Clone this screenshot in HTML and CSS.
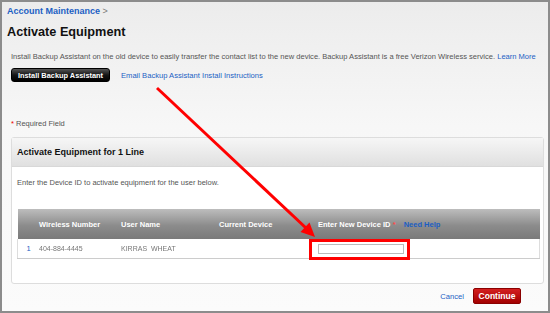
FILE: index.html
```html
<!DOCTYPE html>
<html lang="en">
<head>
    <meta charset="UTF-8">
    <title>Activate Equipment</title>
    <link rel="stylesheet" href="styles.css">
</head>
<body>

    <div class="frame">
        <div class="crumbs"><a href="#">Account Maintenance</a> <span class="sep">&gt;</span></div>
        <h1>Activate Equipment</h1>

        <p class="intro">Install Backup Assistant on the old device to easily transfer the contact list to the new device. Backup Assistant is a free Verizon Wireless service. <a href="#">Learn More</a></p>
        <div class="backup">
            <button class="btn-dark">Install Backup Assistant</button>
            <a href="#">Email Backup Assistant Install Instructions</a>
        </div>

        <div class="required"><span class="star">*</span> Required Field</div>

        <div class="panel">
            <div class="panel-head">Activate Equipment for 1 Line</div>
            <div class="panel-body">
                <p>Enter the Device ID to activate equipment for the user below.</p>
                <table class="lines">
                    <thead>
                        <tr>
                            <th class="num"></th>
                            <th class="c-wn">Wireless Number</th>
                            <th class="c-un">User Name</th>
                            <th class="c-cd">Current Device</th>
                            <th class="c-id">Enter New Device ID <span class="star">*</span> <a href="#">Need Help</a></th>
                        </tr>
                    </thead>
                    <tbody>
                        <tr>
                            <td class="num">1</td>
                            <td><span class="blur">404-884-4445</span></td>
                            <td><span class="blur">KIRRAS &nbsp;WHEAT</span></td>
                            <td></td>
                            <td><input type="text" class="device-id"></td>
                        </tr>
                    </tbody>
                </table>
            </div>
        </div>

        <div class="actions">
            <a href="#">Cancel</a>
            <button class="btn-red">Continue</button>
        </div>

        <!-- callout drawn over the page -->
        <svg class="callout" width="550" height="313" viewBox="0 0 550 313">
            <line x1="157" y1="88" x2="306" y2="228" stroke="#f00" stroke-width="3"/>
            <polygon points="315,237 300.5,232 309.5,222.5" fill="#f00"/>
            <rect x="310.5" y="240.5" width="98" height="18" fill="none" stroke="#f00" stroke-width="3"/>
        </svg>
    </div>

</body>
</html>
```

FILE: styles.css
```css
body {
    margin: 0;
    font-family: 'Liberation Sans', Arial, sans-serif;
    color: #444;
}

a {
    color: #1c5fc4;
    text-decoration: none;
}

.frame {
    position: relative;
    width: 550px;
    height: 313px;
    box-sizing: border-box;
    border: 2px solid #8c8c8c;
    background: linear-gradient(#ececec, #f7f7f7 40%, #fbfbfb);
    padding: 4px 0 0 5px;
}

.crumbs {
    font-size: 9px;
    line-height: 11px;
    font-weight: bold;
}

.crumbs .sep {
    color: #777;
    font-weight: normal;
}

h1 {
    font-size: 12.7px;
    line-height: 16px;
    color: #111;
    margin: 7px 0 0;
}

.intro {
    font-size: 7.55px;
    line-height: 10px;
    color: #555;
    white-space: nowrap;
    margin: 12px 0 0 4px;
}

.backup {
    display: flex;
    align-items: center;
    gap: 11px;
    margin: 6px 0 0 4px;
    font-size: 7.6px;
}

.btn-dark {
    font-family: inherit;
    font-size: 7.4px;
    font-weight: bold;
    white-space: nowrap;
    color: #fff;
    background: linear-gradient(#555, #151515 50%, #000);
    border: 1px solid #000;
    border-radius: 3px;
    padding: 0;
    height: 14px;
    width: 99px;
}

.required {
    font-size: 7.5px;
    line-height: 10px;
    color: #555;
    margin: 37px 0 0 4px;
}

.star {
    color: #e00;
}

.panel {
    width: 533px;
    height: 147px;
    box-sizing: border-box;
    margin: 8px 0 0 4px;
    border: 1px solid #ddd;
    border-radius: 3px;
    background: #fff;
}

.panel-head {
    height: 28px;
    line-height: 28px;
    padding-left: 5px;
    font-size: 9px;
    font-weight: bold;
    color: #111;
    background: linear-gradient(#f6f6f6, #e0e0e0);
    border-bottom: 1px solid #d8d8d8;
}

.panel-body {
    padding: 0 0 0 5px;
}

.panel-body p {
    font-size: 7.5px;
    line-height: 10px;
    color: #555;
    margin: 11px 0 0;
}

.lines {
    margin-top: 21px;
    width: 523px;
    border-collapse: collapse;
    font-size: 7.5px;
}

.lines th {
    height: 30px;
    padding: 0;
    text-align: left;
    color: #fff;
    font-weight: bold;
    background: linear-gradient(#bdbdbd, #8c8c8c 55%, #7a7a7a);
}

.lines th a {
    color: #1c5fc4;
    margin-left: 6px;
}

.lines th .star {
    color: #ff4a4a;
}

.lines td {
    height: 19px;
    padding: 0;
    border-bottom: 1px solid #ccc;
    color: #333;
}

.lines tbody tr {
    border-left: 1px solid #ddd;
    border-right: 1px solid #ddd;
}

.lines .num {
    width: 21px;
    text-align: center;
    color: #1c5fc4;
}

.c-wn { width: 82px; }
.c-un { width: 98px; }
.c-cd { width: 99px; }

.blur {
    display: inline-block;
    color: #777;
    font-size: 7px;
    filter: blur(0.6px);
}

.device-id {
    display: block;
    width: 86px;
    height: 10px;
    padding: 0;
    box-sizing: border-box;
    border: 1px solid #bbb;
    background: #fff;
}

.actions {
    display: flex;
    justify-content: flex-end;
    align-items: center;
    gap: 9px;
    width: 514px;
    margin-top: 4px;
    font-size: 7.6px;
}

.btn-red {
    font-family: inherit;
    font-size: 8.5px;
    font-weight: bold;
    color: #fff;
    background: linear-gradient(#d42020, #a30000);
    border: 1px solid #8a0000;
    border-radius: 2px;
    width: 48px;
    height: 16px;
    padding: 0;
}

.callout {
    position: absolute;
    left: -2px;
    top: -2px;
}
```
